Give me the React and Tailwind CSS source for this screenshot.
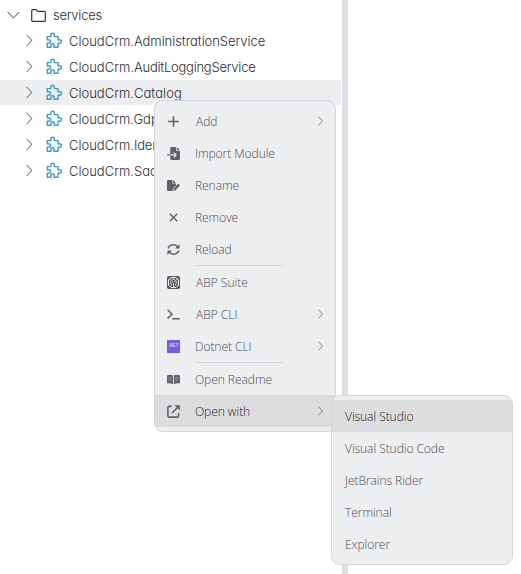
import React from "react";
import { FaFileImport } from "react-icons/fa6";

function ChevronRight({ className, size = 14 }) {
  return (
    <svg className={className} width={size / 2} height={size} viewBox="0 0 7 14" fill="none" stroke="currentColor" strokeWidth="1.1">
      <path d="M0.6 0.8 6.2 7 0.6 13.2" />
    </svg>
  );
}

function PuzzleIcon() {
  return (
    <svg className="ml-[13.5px] shrink-0" width="17" height="17" viewBox="0 0 17 17" fill="none" stroke="#3d9bca" strokeWidth="1.4" strokeLinejoin="round">
      <path d="M1.2 4.6H4.2C5 4.6 5.2 4 4.9 3.3A1.75 1.75 0 1 1 8.3 3.3C8 4 8.2 4.6 9 4.6H12V7.2C12 8 12.6 8.2 13.2 7.9A1.7 1.7 0 1 1 13.2 11.1C12.6 10.8 12 11 12 11.8V15.3H8.8C8 15.3 7.8 14.6 8.1 13.9A1.65 1.65 0 1 0 5 13.9C5.3 14.6 5 15.3 4.3 15.3H1.2V11.8C1.2 11 1.8 10.8 2.4 11.1A1.7 1.7 0 1 0 2.4 7.9C1.8 8.2 1.2 8 1.2 7.2Z" />
    </svg>
  );
}

function PlusIcon() {
  return (
    <svg width="13" height="13" viewBox="0 0 13 13" fill="none" stroke="currentColor" strokeWidth="1.6">
      <path d="M6.5 1.2V11.8M1.2 6.5H11.8" />
    </svg>
  );
}

function RenameIcon() {
  return (
    <svg width="13" height="13" viewBox="0 0 13 13" fill="currentColor">
      <path d="M1 1H5.4V4.4H9V6.2L6 9.4 5.5 12H1A1 1 0 0 1 0 11V2A1 1 0 0 1 1 1Z" />
      <path d="M6 1 9 3.9H6Z" />
      <path d="M11.2 4.6 13 6.4 8.5 11.2 6.2 12 6.8 9.5Z" />
    </svg>
  );
}

function CloseIcon() {
  return (
    <svg width="13" height="13" viewBox="0 0 13 13" fill="none" stroke="currentColor" strokeWidth="1.5">
      <path d="M2.8 2.8 10.2 10.2M10.2 2.8 2.8 10.2" />
    </svg>
  );
}

function ReloadIcon() {
  return (
    <svg width="13" height="13" viewBox="0 0 13 13" fill="none" stroke="currentColor" strokeWidth="1.6">
      <path d="M1.1 5.4C2 2.9 4 1.8 6.4 1.8C8.3 1.8 9.8 2.6 10.8 4.1M11.9 7.6C11 10.1 9 11.2 6.6 11.2C4.7 11.2 3.2 10.4 2.2 8.9" />
      <path d="M12.6 1V5.6H8ZM0.4 12V7.4H5Z" fill="currentColor" stroke="none" />
    </svg>
  );
}

function SuiteIcon() {
  return (
    <svg width="13" height="13" viewBox="0 0 13 13" fill="none">
      <rect width="13" height="13" rx="2" fill="#55565c" />
      <path d="M4 1.5H9L11.5 4V9L9 11.5H4L1.5 9V4Z" stroke="#fff" strokeWidth="1" />
      <path d="M2.5 3 6.5 6.2 10.5 3M6.5 6.2V11M3.5 5.5 4.5 9.5M9.5 5.5 8.5 9.5M5 3.3H8" stroke="#fff" strokeWidth="0.8" />
      <circle cx="6.5" cy="6.3" r="0.9" fill="#7e577b" />
    </svg>
  );
}

function TerminalIcon() {
  return (
    <svg width="13" height="13" viewBox="0 0 13 13" fill="none" stroke="currentColor" strokeWidth="1.5">
      <path d="M0.6 1.8 5 6.2 0.6 10.4M5.2 10.8H12.8" />
    </svg>
  );
}

function DotnetIcon() {
  return (
    <span className="flex h-[13px] w-[13px] items-center justify-center bg-[#7a5bdc] font-['Liberation_Sans',sans-serif] text-[4.5px] font-bold leading-none text-[#d6cdf7]">
      .NET
    </span>
  );
}

function BookIcon() {
  return (
    <svg width="13" height="13" viewBox="0 0 13 13" fill="none">
      <path d="M0 2.4Q3.2 1.2 6.1 2.6V11.2Q3.5 9.9 0 10.4ZM13 2.4Q9.8 1.2 6.9 2.6V11.2Q9.5 9.9 13 10.4Z" fill="#616268" />
      <path d="M1.5 4.6H5M1.5 6.9H5M8 4.6H11.5M8 6.9H11.5" stroke="#a9aaae" strokeWidth="0.7" />
    </svg>
  );
}

function OpenWithIcon() {
  return (
    <svg width="13" height="13" viewBox="0 0 13 13" fill="none" stroke="currentColor" strokeWidth="1.6">
      <path d="M4.6 1.4H2A1.2 1.2 0 0 0 0.9 2.6V11A1.2 1.2 0 0 0 2 12.1H10.5A1.2 1.2 0 0 0 11.6 11V8.2M5 8 11 2" />
      <path d="M7.5 0.2H12.8V5.5Z" fill="currentColor" stroke="none" />
    </svg>
  );
}

const nodes = [
  ["AdministrationService", "tracking-[-0.06px]"],
  ["AuditLoggingService", "tracking-[-0.24px]"],
  ["Catalog", "tracking-[0.05px]"],
  ["Gdp", "tracking-[0px]"],
  ["Iden", "tracking-[-0.2px]"],
  ["Saa", "tracking-[0px]"],
];

function TreeNode({ label, tracking, active }) {
  return (
    <div className="h-[26px] pb-px">
      <div className={`flex h-[25px] items-center pl-[26px] ${active ? "bg-[#edeef0]" : ""}`}>
        <ChevronRight className="text-[#77787c]" size={13} />
        <PuzzleIcon />
        <span className="ml-[6px] whitespace-nowrap pt-[2px]">
          CloudCrm.<span className={tracking}>{label}</span>
        </span>
      </div>
    </div>
  );
}

function MenuItem({ icon, label, arrow, active }) {
  return (
    <div className={`flex h-8 items-center pl-3 pr-3 ${active ? "bg-[#dcdddf] text-[#1f2026]" : "text-[#4b4c52]"}`}>
      <span className="flex w-[13px] shrink-0 pt-px text-[#606167]">{icon}</span>
      <span className={`flex-1 whitespace-nowrap pt-[2px] ${label.startsWith("A") ? "ml-4" : "ml-[15px] tracking-[-0.05px]"}`}>{label}</span>
      {arrow && <ChevronRight className="text-[#66676d]" size={10} />}
    </div>
  );
}

function Separator() {
  return <div className="ml-10 h-px w-[88px] bg-[#d5d6db]" />;
}

export default function App() {
  return (
    <div className="relative h-[574px] w-[521px] overflow-hidden bg-white">
      <div className="flex h-full">
        <div className="w-[341px] pt-[2px] font-['Inter','Open_Sans',sans-serif] text-[13px] font-light text-[#2b2c33] [font-feature-settings:'cv11']">
          <div className="flex h-[26px] items-center pl-[7px]">
            <svg width="13" height="8" viewBox="0 0 13 8" fill="none" stroke="#77787c" strokeWidth="1.1">
              <path d="M0.5 0.8 6.5 6.8 12.5 0.8" />
            </svg>
            <svg className="ml-[11px]" width="15" height="13" viewBox="0 0 15 13" fill="none" stroke="#37383f" strokeWidth="1.2">
              <path d="M0.7 1.6A0.9 0.9 0 0 1 1.6 0.7H5.2L6.7 2.4H13.4A0.9 0.9 0 0 1 14.3 3.3V11.4A0.9 0.9 0 0 1 13.4 12.3H1.6A0.9 0.9 0 0 1 0.7 11.4Z" />
            </svg>
            <span className="ml-[7px] pt-px tracking-[-0.25px]">services</span>
          </div>
          {nodes.map(([label, tracking]) => (
            <TreeNode key={label} label={label} tracking={tracking} active={label === "Catalog"} />
          ))}
        </div>
        <div className="ml-px w-[6px] bg-[#dddee3]" />
      </div>

      <div className="absolute left-[154px] top-[100px] w-[182px] overflow-hidden rounded-[9px] border border-[#d5d6dd] bg-[#edeef0] py-1 font-['Open_Sans','Noto_Sans',sans-serif] text-[12px] font-light">
        <MenuItem icon={<PlusIcon />} label="Add" arrow />
        <MenuItem icon={<FaFileImport size={13} />} label="Import Module" />
        <MenuItem icon={<RenameIcon />} label="Rename" />
        <MenuItem icon={<CloseIcon />} label="Remove" />
        <MenuItem icon={<ReloadIcon />} label="Reload" />
        <Separator />
        <MenuItem icon={<SuiteIcon />} label="ABP Suite" />
        <MenuItem icon={<TerminalIcon />} label="ABP CLI" arrow />
        <MenuItem icon={<DotnetIcon />} label="Dotnet CLI" arrow />
        <Separator />
        <MenuItem icon={<BookIcon />} label="Open Readme" />
        <MenuItem icon={<OpenWithIcon />} label="Open with" arrow active />
      </div>

      <div className="absolute left-[331px] top-[395px] w-[182px] overflow-hidden rounded-[9px] border border-[#d5d6dd] bg-[#edeef0] py-1 font-['Open_Sans','Noto_Sans',sans-serif] text-[12px] font-light tracking-[-0.05px] text-[#4b4c52]">
        {["Visual Studio", "Visual Studio Code", "JetBrains Rider", "Terminal", "Explorer"].map((label, i) => (
          <div key={label} className={`flex h-8 items-center pl-[13px] pt-[2px] ${i === 0 ? "bg-[#dcdddf] text-[#1f2026]" : ""}`}>
            {label}
          </div>
        ))}
      </div>
    </div>
  );
}
